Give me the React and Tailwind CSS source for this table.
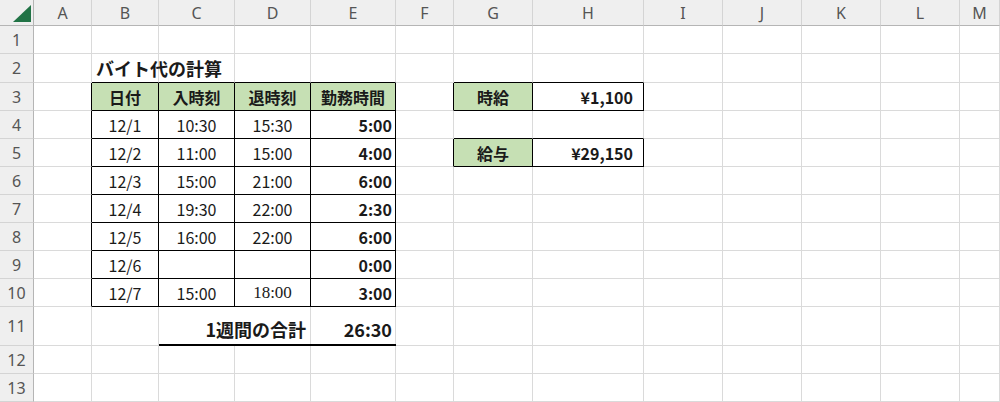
import React from "react";

const COLS = ["A", "B", "C", "D", "E", "F", "G", "H", "I", "J", "K", "L", "M"];
const ROW_COUNT = 13;

// cells that get a thin black box around them
const boxed = (r, c) =>
  (r >= 3 && r <= 10 && c >= 2 && c <= 5) ||
  (r === 3 && (c === 7 || c === 8)) ||
  (r === 5 && (c === 7 || c === 8));

const green = "bg-[#c6e0b4] justify-center font-bold";
const center = "justify-center";
const boldRight = "justify-end pr-[3px] font-bold";

const cells = {
  "2-2": { text: "バイト代の計算", cls: "pl-[4px] font-bold text-[18px] whitespace-nowrap overflow-visible z-10" },
  "3-2": { text: "日付", cls: green },
  "3-3": { text: "入時刻", cls: green },
  "3-4": { text: "退時刻", cls: green },
  "3-5": { text: "勤務時間", cls: green },
  "3-7": { text: "時給", cls: green },
  "3-8": { text: "¥1,100", cls: "justify-end pr-[10px] font-bold" },
  "5-7": { text: "給与", cls: green },
  "5-8": { text: "¥29,150", cls: "justify-end pr-[10px] font-bold" },
};

const times = [
  ["12/1", "10:30", "15:30", "5:00"],
  ["12/2", "11:00", "15:00", "4:00"],
  ["12/3", "15:00", "21:00", "6:00"],
  ["12/4", "19:30", "22:00", "2:30"],
  ["12/5", "16:00", "22:00", "6:00"],
  ["12/6", "", "", "0:00"],
  ["12/7", "15:00", "18:00", "3:00"],
];

times.forEach((row, i) => {
  const r = 4 + i;
  cells[`${r}-2`] = { text: row[0], cls: center };
  cells[`${r}-3`] = { text: row[1], cls: center };
  cells[`${r}-4`] = {
    text: row[2],
    // the 18:00 cell is typed in a serif face in the sheet
    cls: r === 10 ? center + " font-['Liberation_Serif',serif] text-[17px]" : center,
  };
  cells[`${r}-5`] = { text: row[3], cls: boldRight };
});

const Cell = ({ r, c }) => {
  const cell = cells[`${r}-${c}`];
  const rightBlack = boxed(r, c) || boxed(r, c + 1);
  const bottomBlack = boxed(r, c) || boxed(r + 1, c);
  return (
    <div
      className={[
        "flex items-center min-w-0 border-r border-b text-[16px] text-[#1a1a1a]",
        rightBlack ? "border-r-black" : "border-r-[#dadada]",
        bottomBlack ? "border-b-black" : "border-b-[#dadada]",
        cell ? cell.cls : "",
      ].join(" ")}
    >
      {cell && cell.text}
    </div>
  );
};

// total row: gridline drawn as inset shadow so the thick underline runs unbroken
const Row11 = () => (
  <>
    <div className="border-r border-b border-r-[#dadada] border-b-[#dadada]" />
    <div className="border-r border-b border-r-[#dadada] border-b-[#dadada]" />
    <div className="col-span-2 flex items-end justify-end pb-[4px] pr-[5px] border-b-2 border-b-black shadow-[inset_-1px_0_0_#dadada] text-[18px] font-bold leading-[22px] text-[#1a1a1a]">
      1週間の合計
    </div>
    <div className="flex items-end justify-end pb-[4px] pr-[4px] border-b-2 border-b-black shadow-[inset_-1px_0_0_#dadada] text-[18px] font-bold leading-[22px] text-[#1a1a1a]">
      26:30
    </div>
    {COLS.slice(5).map((l) => (
      <div key={l} className="border-r border-b border-r-[#dadada] border-b-[#dadada]" />
    ))}
  </>
);

export default function App() {
  return (
    <div className="w-[1000px] h-[402px] overflow-hidden bg-white font-['Noto_Sans_CJK_JP','Noto_Sans',sans-serif]">
      <div className="grid grid-cols-[34px_58px_67px_76px_76px_85px_58px_79px_111px_79px_79px_79px_79px_1fr] grid-rows-[26px_28px_29px_28px_28px_28px_28px_28px_28px_28px_28px_39px_28px_28px]">
        {/* corner */}
        <div className="relative bg-[#efefef] border-r border-b border-r-[#b5b5b5] border-b-[#b5b5b5]">
          <svg className="absolute left-[13px] top-[5px]" width="18" height="17" viewBox="0 0 18 17">
            <polygon points="18,0 18,17 0,17" fill="#217346" />
          </svg>
        </div>
        {COLS.map((l) => (
          <div
            key={l}
            className="flex items-center justify-center bg-[#efefef] border-r border-b border-r-[#d4d4d4] border-b-[#b5b5b5] text-[16px] text-[#555] font-['Noto_Sans',sans-serif]"
          >
            {l}
          </div>
        ))}

        {Array.from({ length: ROW_COUNT }, (_, i) => i + 1).map((r) => (
          <React.Fragment key={r}>
            <div className="flex items-center justify-center bg-[#efefef] border-r border-b border-r-[#b5b5b5] border-b-[#d4d4d4] text-[16px] text-[#555] font-['Noto_Sans',sans-serif]">
              {r}
            </div>
            {r === 11 ? (
              <Row11 />
            ) : (
              COLS.map((l, ci) => <Cell key={l} r={r} c={ci + 1} />)
            )}
          </React.Fragment>
        ))}
      </div>
    </div>
  );
}
